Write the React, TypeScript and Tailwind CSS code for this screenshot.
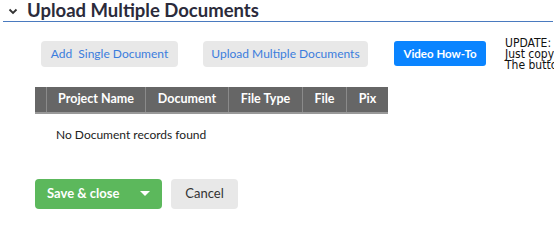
import React from 'react';

const columns = [
  { label: '', width: 'w-[11px]' },
  { label: 'Project Name', width: 'w-[99px]' },
  { label: 'Document', width: 'w-[83px]' },
  { label: 'File Type', width: 'w-[74px]' },
  { label: 'File', width: 'w-[44px]' },
  { label: 'Pix', width: 'w-[42px]' },
];

export default function App() {
  return (
    <div className="w-[554px] h-[249px] overflow-hidden bg-white font-['Lato','Noto_Sans',sans-serif] text-[#333]">
      <div className="ml-[3px] mr-[1px] h-[22px] flex items-center border-b border-[#4a7abf]">
        <svg width="10" height="7" viewBox="0 0 10 7" className="ml-[5px] mt-[1px] shrink-0">
          <path d="M1.5 1.5 L5 5 L8.5 1.5" fill="none" stroke="#333" strokeWidth="1.8" />
        </svg>
        <h2 className="ml-[9px] text-[18.5px] font-bold leading-none text-[#2b2b3b] whitespace-nowrap">
          Upload Multiple Documents
        </h2>
      </div>

      <div className="flex items-start mt-[15px] ml-[41px] whitespace-nowrap">
        <button className="shrink-0 mt-[4px] w-[137px] h-[26px] rounded-[4px] bg-[#e8e8e8] text-[12px] text-[#3b7ddd]">
          Add&nbsp; Single Document
        </button>
        <button className="shrink-0 mt-[4px] ml-[25px] w-[165px] h-[26px] rounded-[4px] bg-[#e8e8e8] text-[12px] text-[#3b7ddd]">
          Upload Multiple Documents
        </button>
        <button className="shrink-0 mt-[4px] ml-[26px] w-[92px] h-[25px] rounded-[3px] bg-[#0a84ff] text-[11.5px] font-bold text-white">
          Video How-To
        </button>
        <div className="shrink-0 ml-[19px] mt-[1px] font-['DejaVu_Sans_Condensed','DejaVu_Sans',sans-serif] text-[12px] leading-[11px] text-[#111]">
          <div>UPDATE: You can now</div>
          <div>Just copy and paste</div>
          <div>The buttons below</div>
        </div>
      </div>

      <div className="mt-[16px] ml-[35px] flex w-fit h-[27px] bg-[#666] border-b-2 border-[#999]">
        {columns.map((c, i) => (
          <div
            key={i}
            className={`${c.width} shrink-0 flex items-center justify-center text-[12.5px] font-bold text-white ${i > 0 ? 'border-l border-[#8a8a8a]' : ''}`}
          >
            {c.label}
          </div>
        ))}
      </div>

      <div className="mt-[12px] ml-[56px] text-[12px] text-[#222]">No Document records found</div>

      <div className="mt-[35px] ml-[35px] flex">
        <button className="w-[127px] h-[30px] rounded-[4px] bg-[#5cb85c] flex items-center text-[13px] font-bold text-white">
          <span className="ml-[12px]">Save &amp; close</span>
          <svg width="10" height="6" viewBox="0 0 10 6" className="ml-[21px]">
            <path d="M0 0 L10 0 L5 5 Z" fill="#fff" />
          </svg>
        </button>
        <button className="ml-[9px] w-[67px] h-[30px] rounded-[4px] bg-[#e8e8e8] text-[13px] text-[#333]">
          Cancel
        </button>
      </div>
    </div>
  );
}
